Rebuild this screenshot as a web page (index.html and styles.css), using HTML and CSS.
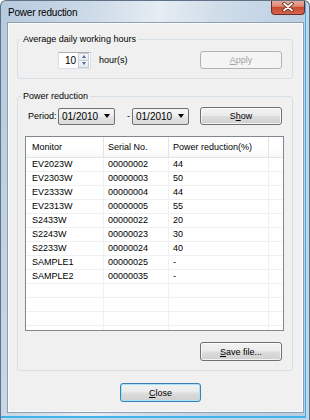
FILE: index.html
```html
<!DOCTYPE html>
<html lang="en">
<head>
    <meta charset="UTF-8">
    <title>Power reduction</title>
    <link rel="stylesheet" href="styles.css">
</head>
<body>
    <div class="window">
        <div class="titlebar">
            <span class="title">Power reduction</span>
            <span class="close-x">
                <svg width="12" height="10" viewBox="0 0 12 10">
                    <path d="M2 1.5 L10 8.5 M10 1.5 L2 8.5" stroke="#5a1f16" stroke-width="3.4" stroke-linecap="round"/>
                    <path d="M2 1.5 L10 8.5 M10 1.5 L2 8.5" stroke="#ffffff" stroke-width="1.8" stroke-linecap="round"/>
                </svg>
            </span>
        </div>
        <div class="client">
            <fieldset class="group group-hours">
                <legend>Average daily working hours</legend>
                <div class="row hours-row">
                    <div class="spin">
                        <span class="spin-value">10</span>
                        <span class="spin-btns">
                            <span class="spin-btn"><span class="arrow-up"></span></span>
                            <span class="spin-btn"><span class="arrow-down"></span></span>
                        </span>
                    </div>
                    <span class="unit">hour(s)</span>
                    <button class="btn btn-disabled"><u>A</u>pply</button>
                </div>
            </fieldset>
            <fieldset class="group group-power">
                <legend>Power reduction</legend>
                <div class="row period-row">
                    <span class="period-label">Period:</span>
                    <div class="combo"><span>01/2010</span><span class="arrow-down dark"></span></div>
                    <span class="dash">-</span>
                    <div class="combo"><span>01/2010</span><span class="arrow-down dark"></span></div>
                    <button class="btn">S<u>h</u>ow</button>
                </div>
                <div class="list">
                    <div class="list-row list-head">
                        <span>Monitor</span><span>Serial No.</span><span>Power reduction(%)</span><span></span>
                    </div>
                    <div id="list-body"></div>
                </div>
                <div class="row save-row">
                    <button class="btn"><u>S</u>ave file...</button>
                </div>
            </fieldset>
            <div class="footer">
                <button class="btn btn-default"><u>C</u>lose</button>
            </div>
        </div>
    </div>
    <script>
        const monitors = [
            ['EV2023W', '00000002', '44'],
            ['EV2303W', '00000003', '50'],
            ['EV2333W', '00000004', '44'],
            ['EV2313W', '00000005', '55'],
            ['S2433W', '00000022', '20'],
            ['S2243W', '00000023', '30'],
            ['S2233W', '00000024', '40'],
            ['SAMPLE1', '00000025', '-'],
            ['SAMPLE2', '00000035', '-']
        ];

        const listBody = document.getElementById('list-body');
        // pad with empty rows so the grid lines run to the bottom
        for (let i = 0; i < 13; i++) {
            const m = monitors[i] || ['', '', ''];
            const row = document.createElement('div');
            row.className = 'list-row';
            row.innerHTML = `<span>${m[0]}</span><span>${m[1]}</span><span>${m[2]}</span><span></span>`;
            listBody.appendChild(row);
        }
    </script>
</body>
</html>
```

FILE: styles.css
```css
html, body {
    margin: 0;
    padding: 0;
    background: #ffffff;
}
body {
    font-family: "Liberation Sans", Arial, sans-serif;
    font-size: 9px;
    color: #000;
}
.window {
    width: 310px;
    height: 420px;
    box-sizing: border-box;
    display: flex;
    flex-direction: column;
    padding: 0 5px 7px 6px;
    border: 1px solid #5f7286;
    border-bottom: none;
    border-radius: 6px 6px 0 0;
    background: linear-gradient(100deg, #b6cade 0%, #cedbe8 25%, #e6edf3 42%, #d3dfea 55%, #bfd2e4 75%, #b9cee2 100%);
    box-shadow: inset -3px -2px 0 #c3d6e9, inset -4px -4px 0 #3db3ea;
    overflow: hidden;
}
.titlebar {
    height: 21px;
    display: flex;
    align-items: flex-start;
}
.title {
    font-size: 10px;
    letter-spacing: -0.2px;
    margin-top: 6px;
    padding-left: 1px;
}
.close-x {
    margin-left: auto;
    margin-right: -1px;
    margin-top: -1px;
    width: 34px;
    height: 15px;
    box-sizing: border-box;
    border: 1px solid #6b2b22;
    border-top: none;
    border-radius: 0 0 4px 4px;
    background: linear-gradient(#eab0a2 0%, #dc8a74 45%, #c74a31 52%, #d4654a 100%);
    display: flex;
    align-items: center;
    justify-content: center;
}
.close-x svg {
    display: block;
}
.client {
    flex: 1;
    background: #f0f0f0;
    border: 1px solid #8d9eb1;
    box-shadow: inset 0 0 0 1px #fbfcfd;
    padding-top: 10px;
}

/* group boxes */
.group {
    margin: 0 0 0 9px;
    width: 276px;
    box-sizing: border-box;
    padding: 0;
    border: 1px solid #d5dfe5;
    border-radius: 3px;
    min-inline-size: 0;
}
.group legend {
    margin-left: 3px;
    padding: 0 2px;
    line-height: 12px;
}
.group-power {
    margin-top: 11px;
}
.row {
    display: flex;
    align-items: center;
}
.hours-row {
    height: 18px;
    margin: 6px 10px 9px 40px;
}
.period-row {
    height: 18px;
    margin: 5px 10px 0 10px;
}
.save-row {
    justify-content: flex-end;
    margin: 11px 10px 9px 0;
}

/* buttons */
.btn {
    font: inherit;
    color: #000;
    width: 82px;
    height: 19px;
    padding: 0;
    margin-left: auto;
    border: 1px solid #707070;
    border-radius: 3px;
    background: linear-gradient(#f2f2f2 0%, #ebebeb 48%, #dddddd 52%, #cfcfcf 100%);
    box-shadow: inset 0 0 0 1px rgba(255, 255, 255, 0.75);
}
.hours-row .btn, .period-row .btn {
    height: 18px;
}
.btn-disabled {
    color: #a3a3a3;
    border-color: #adb2b5;
    background: #f4f4f4;
    box-shadow: none;
}
.btn-default {
    width: 81px;
    margin-left: 112px;
    border-color: #3c7fb1;
    box-shadow: inset 0 0 0 1px #a6e3f8;
}
.footer {
    display: flex;
    margin-top: 12px;
}

/* spinner */
.spin {
    width: 33px;
    height: 17px;
    box-sizing: border-box;
    display: flex;
    background: #fff;
    border: 1px solid #dbdfe6;
    border-top-color: #abadb3;
}
.spin-value {
    flex: 1;
    text-align: right;
    padding-right: 2px;
    line-height: 15px;
    font-size: 10px;
}
.spin-btns {
    width: 11px;
    display: flex;
    flex-direction: column;
    margin: 0 1px 0 0;
}
.spin-btn {
    flex: 1;
    display: flex;
    align-items: center;
    justify-content: center;
    background: linear-gradient(#f4f6f8, #e3e8ee);
    border: 1px solid #c3cbd5;
    border-radius: 1px;
}
.spin-btn + .spin-btn {
    border-top: none;
}
.arrow-up {
    width: 0;
    height: 0;
    border-left: 2.5px solid transparent;
    border-right: 2.5px solid transparent;
    border-bottom: 3px solid #4e6c94;
}
.arrow-down {
    width: 0;
    height: 0;
    border-left: 2.5px solid transparent;
    border-right: 2.5px solid transparent;
    border-top: 3px solid #4e6c94;
}
.arrow-down.dark {
    border-left-width: 3.5px;
    border-right-width: 3.5px;
    border-top: 4px solid #000;
}
.unit {
    margin-left: 8px;
}

/* period */
.period-label {
    width: 30px;
}
.combo {
    width: 57px;
    height: 17px;
    box-sizing: border-box;
    display: flex;
    align-items: center;
    justify-content: space-between;
    padding: 0 4px 0 3px;
    font-size: 10px;
    border: 1px solid #707070;
    border-radius: 2px;
    background: linear-gradient(#f6f6f6 0%, #eeeeee 48%, #e4e4e4 52%, #dadada 100%);
}
.dash {
    width: 17px;
    padding-left: 12px;
    box-sizing: border-box;
}

/* list view */
.list {
    margin: 11px 0 0 7px;
    width: 259px;
    height: 195px;
    box-sizing: border-box;
    border: 1px solid #828790;
    background: #fff;
    overflow: hidden;
}
.list-row {
    display: grid;
    grid-template-columns: 78px 65px 100px 14px;
    height: 14px;
    box-sizing: border-box;
    border-bottom: 1px solid #f0f0f0;
}
.list-row span {
    border-right: 1px solid #f0f0f0;
    padding-left: 4px;
    line-height: 13px;
    white-space: nowrap;
    overflow: hidden;
}
.list-row span:first-child {
    padding-left: 6px;
}
.list-row span:last-child {
    border-right: none;
}
.list-head {
    height: 21px;
    border-bottom: 1px solid #e5e5e5;
    background: linear-gradient(#ffffff 0%, #ffffff 60%, #f7f8f9 100%);
}
.list-head span {
    line-height: 20px;
    border-right-color: #e2e3e5;
}
.list-head span:last-child {
    border-right: none;
}
```
